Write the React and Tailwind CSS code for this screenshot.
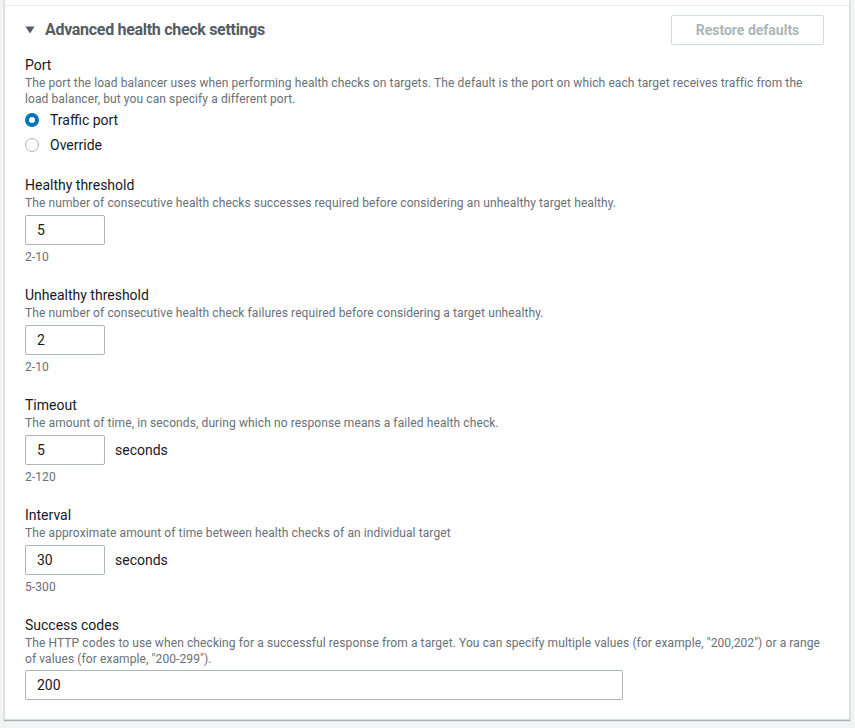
import React from "react";

const font = { fontFamily: "Roboto, 'Noto Sans', sans-serif" };

function Label({ children }) {
  return <div className="text-[14px] leading-[20px] text-[#16191f]">{children}</div>;
}
function Desc({ children }) {
  return <div className="text-[12px] leading-[16px] tracking-[0.1px] text-[#687078]">{children}</div>;
}
function Hint({ children }) {
  return <div className="mt-[4px] text-[12px] leading-[16px] tracking-[0.1px] text-[#687078]">{children}</div>;
}
function NumInput({ value, suffix }) {
  return (
    <div className="mt-[4px] flex items-center">
      <div className="flex h-[30px] w-[80px] items-center rounded-[2px] border border-[#aab7b8] bg-white pl-[11px] text-[14px] text-[#16191f]">
        {value}
      </div>
      {suffix && <span className="ml-[10px] text-[14px] text-[#16191f]">{suffix}</span>}
    </div>
  );
}

function Radio({ checked, label }) {
  return (
    <div className="flex h-[20px] items-center">
      {checked ? (
        <span className="flex h-[14px] w-[14px] items-center justify-center rounded-full bg-[#0073bb]">
          <span className="h-[6px] w-[6px] rounded-full bg-white" />
        </span>
      ) : (
        <span className="h-[14px] w-[14px] rounded-full border border-[#aab7b8] bg-white" />
      )}
      <span className="ml-[11px] text-[14px] text-[#16191f]">{label}</span>
    </div>
  );
}

export default function App() {
  return (
    <div className="h-[728px] w-[855px] overflow-hidden bg-[#f2f3f3]" style={font}>
      <div className="ml-[4px] mr-[5px] border-x border-b border-[#d5dbdb] bg-white pt-[5px] shadow-[0_1px_1px_0_rgba(0,28,36,0.3)]">
        <div className="border-t border-[#eaeded] pb-[19px] pl-[20px] pr-[25px] pt-[9px]">
          <div className="flex items-center justify-between">
            <div className="flex items-center">
              <svg width="10" height="8" viewBox="0 0 10 8">
                <path d="M0.5 0.5 L9.5 0.5 L5 7.5 Z" fill="#545b64" />
              </svg>
              <span className="ml-[10px] text-[16px] font-bold tracking-[-0.3px] text-[#545b64]">Advanced health check settings</span>
            </div>
            <div className="flex h-[30px] w-[153px] items-center justify-center rounded-[2px] border border-[#d5dbdb] text-[14px] font-bold text-[#aab7b8]">
              Restore defaults
            </div>
          </div>

          <div className="mt-[10px]">
            <Label>Port</Label>
            <Desc>
              The port the load balancer uses when performing health checks on targets. The default is the port on which each target receives traffic from the load balancer, but you can specify a different port.
            </Desc>
            <div className="mt-[3px] flex flex-col gap-[5px]">
              <Radio checked label="Traffic port" />
              <Radio label="Override" />
            </div>
          </div>

          <div className="mt-[20px]">
            <Label>Healthy threshold</Label>
            <Desc>The number of consecutive health checks successes required before considering an unhealthy target healthy.</Desc>
            <NumInput value="5" />
            <Hint>2-10</Hint>
          </div>

          <div className="mt-[20px]">
            <Label>Unhealthy threshold</Label>
            <Desc>The number of consecutive health check failures required before considering a target unhealthy.</Desc>
            <NumInput value="2" />
            <Hint>2-10</Hint>
          </div>

          <div className="mt-[20px]">
            <Label>Timeout</Label>
            <Desc>The amount of time, in seconds, during which no response means a failed health check.</Desc>
            <NumInput value="5" suffix="seconds" />
            <Hint>2-120</Hint>
          </div>

          <div className="mt-[20px]">
            <Label>Interval</Label>
            <Desc>The approximate amount of time between health checks of an individual target</Desc>
            <NumInput value="30" suffix="seconds" />
            <Hint>5-300</Hint>
          </div>

          <div className="mt-[20px]">
            <Label>Success codes</Label>
            <Desc>
              The HTTP codes to use when checking for a successful response from a target. You can specify multiple values (for example, "200,202") or a range of values (for example, "200-299").
            </Desc>
            <div className="mt-[3px] flex h-[30px] w-[598px] items-center rounded-[2px] border border-[#aab7b8] bg-white pl-[11px] text-[14px] text-[#16191f]">
              200
            </div>
          </div>
        </div>
      </div>
    </div>
  );
}
